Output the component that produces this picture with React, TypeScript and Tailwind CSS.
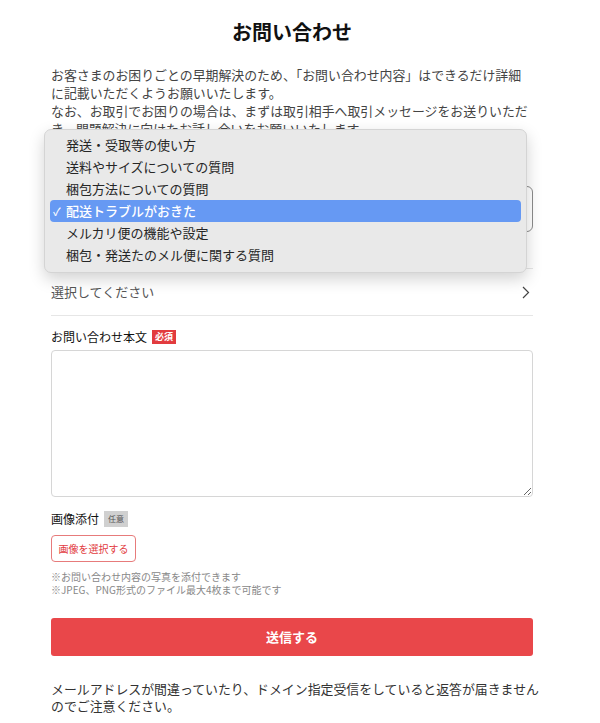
import React from "react";

const menuItems = [
  "発送・受取等の使い方",
  "送料やサイズについての質問",
  "梱包方法についての質問",
  "配送トラブルがおきた",
  "メルカリ便の機能や設定",
  "梱包・発送たのメル便に関する質問",
];

const selected = 3;

const App = () => {
  return (
    <div className="min-h-screen bg-white font-['Noto_Sans_CJK_JP','Noto_Sans',sans-serif] text-[#222]">
      <div className="relative ml-[51px] w-[482px] pb-6">
        <h1 className="pt-[18px] text-center text-[20px] font-semibold leading-[28px] text-[#111]">
          お問い合わせ
        </h1>

        <p className="mt-[20px] whitespace-nowrap text-[12.9px] leading-[18px] text-[#444]">
          お客さまのお困りごとの早期解決のため、「お問い合わせ内容」はできるだけ詳細
          <br />
          に記載いただくようお願いいたします。
          <br />
          なお、お取引でお困りの場合は、まずは取引相手へ取引メッセージをお送りいただ
          <br />
          き、問題解決に向けたお話し合いをお願いいたします。
        </p>

        <div className="mt-[16px] flex items-center gap-1 text-[12px] leading-[20px] text-[#111]">
          お問い合わせ内容
          <span className="bg-[#e23b3e] px-[3px] text-[9px] font-bold leading-[14px] text-white">必須</span>
        </div>
        <div className="mt-[12px] flex h-[46px] items-center rounded-[6px] border border-[#8c8c8c] px-3 text-[13px]">
          配送トラブルがおきた
        </div>

        <div className="mt-[36px] flex h-[48px] items-center justify-between border-y border-[#e6e6e6] text-[13px] text-[#555]">
          <span>選択してください</span>
          <svg width="8" height="13" viewBox="0 0 8 13" className="mr-[3px]">
            <path d="M1 1l5.5 5.5L1 12" fill="none" stroke="#444" strokeWidth="1.2" />
          </svg>
        </div>

        <div className="mt-[11px] flex items-center gap-[5px] text-[12px] leading-[20px] text-[#111]">
          お問い合わせ本文
          <span className="bg-[#e23b3e] px-[3px] text-[9px] font-bold leading-[14px] text-white">必須</span>
        </div>
        <textarea className="mt-[3px] block h-[147px] w-full resize-y rounded-[4px] border border-[#d6d6d6] outline-none" />

        <div className="mt-[12px] flex items-center gap-[5px] text-[12px] leading-[20px] text-[#111]">
          画像添付
          <span className="bg-[#d0d0d0] px-[4px] text-[8px] leading-[16px] text-[#555]">任意</span>
        </div>
        <button className="mt-[6px] flex h-[27px] w-[85px] items-center justify-center rounded-[4px] border border-[#e77b7b] text-[10px] text-[#e23b3e]">
          画像を選択する
        </button>

        <div className="mt-2 text-[10px] leading-[13px] text-[#888]">
          <p>※お問い合わせ内容の写真を添付できます</p>
          <p>※JPEG、PNG形式のファイル最大4枚まで可能です</p>
        </div>

        <button className="mt-[22px] flex h-[38px] w-full items-center justify-center rounded-[3px] bg-[#e9474a] text-[13px] font-bold text-white">
          送信する
        </button>

        <p className="mt-[24px] whitespace-nowrap text-[12.9px] leading-[17px] text-[#333]">
          メールアドレスが間違っていたり、ドメイン指定受信をしていると返答が届きません
          <br />
          のでご注意ください。
        </p>

        {/* native select popup */}
        <div className="absolute left-[-7px] top-[129px] w-[483px] rounded-[7px] border border-[#d4d4d4] bg-[#e9e9e9] px-[5px] pb-[6px] pt-[4px] shadow-[0_6px_16px_rgba(0,0,0,0.18)]">
          {menuItems.map((item, i) => (
            <div
              key={item}
              className={
                i === selected
                  ? "flex h-[22px] items-center rounded-[4px] bg-[#6699f3] text-[13px] font-medium text-white"
                  : "flex h-[22px] items-center text-[13px] text-[#262626]"
              }
            >
              <span className="w-[16px] pl-[3px] text-[11px] leading-none">{i === selected ? "✓" : ""}</span>
              {item}
            </div>
          ))}
        </div>
      </div>
    </div>
  );
};

export default App;
